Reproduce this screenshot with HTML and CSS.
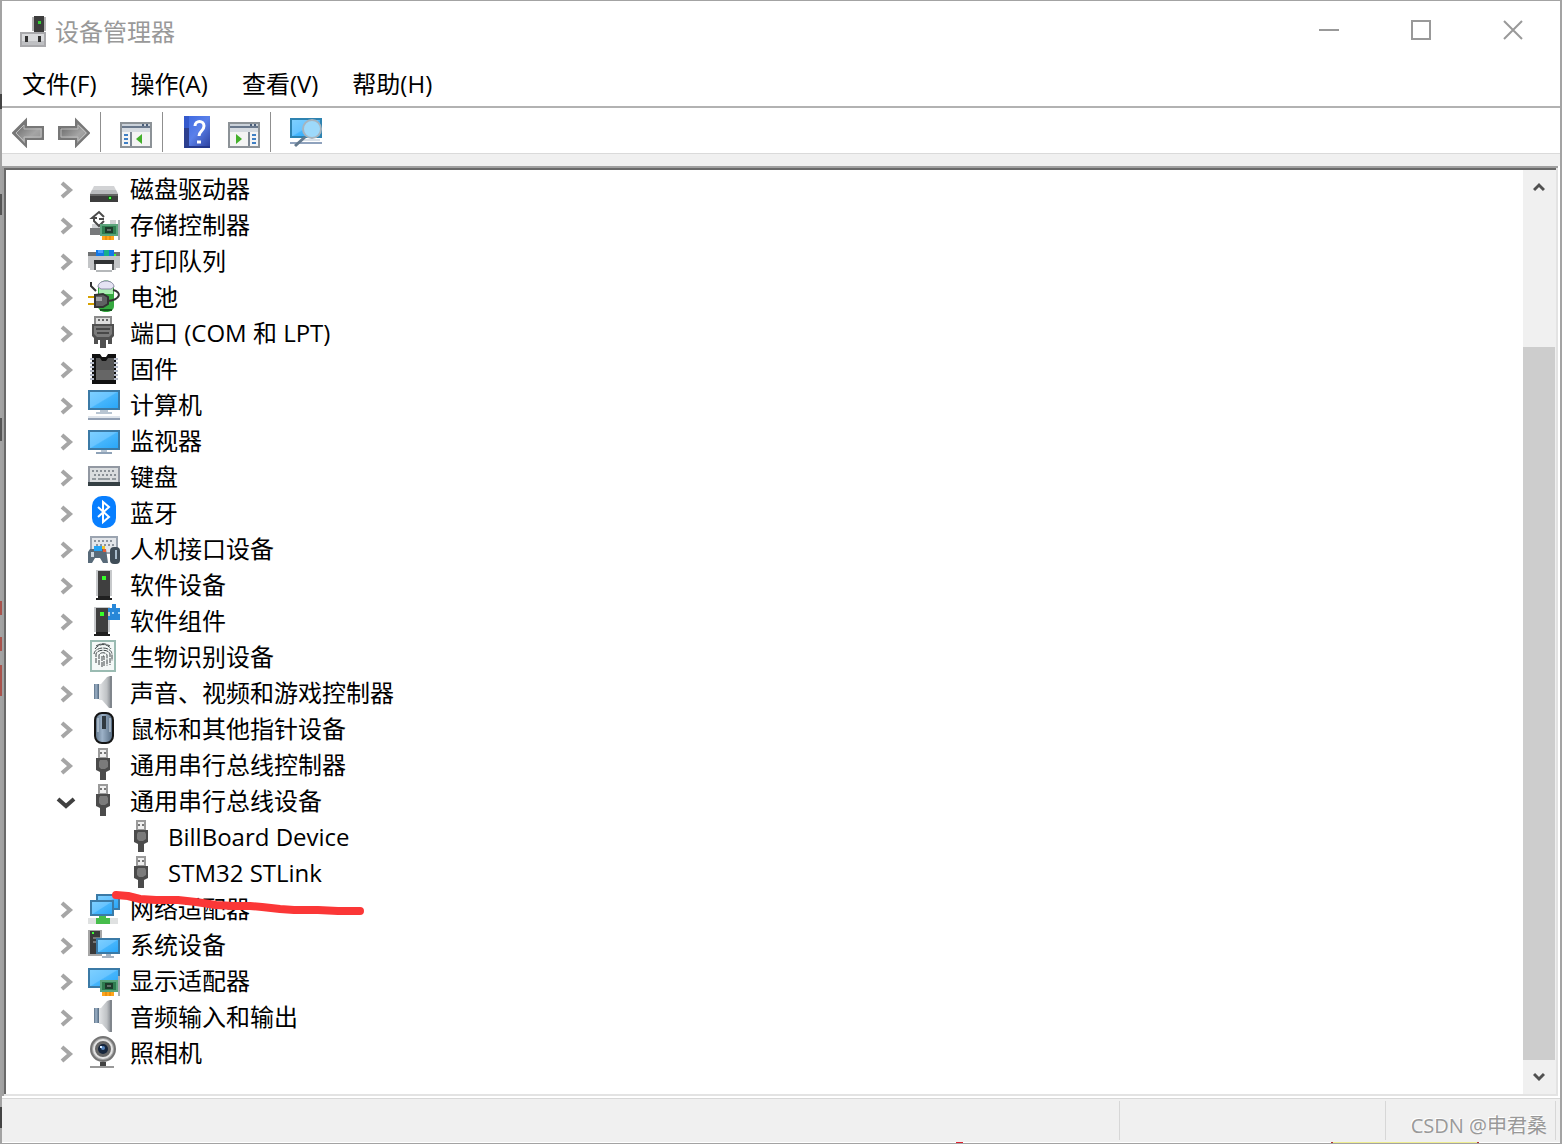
FILE: index.html
```html
<!DOCTYPE html>
<html lang="zh-CN">
<head>
<meta charset="utf-8">
<title>设备管理器</title>
<link rel="stylesheet" href="styles.css">
</head>
<body>
<svg class="sprite" aria-hidden="true">
  <defs>
    <linearGradient id="sky" x1="0" y1="0" x2="1" y2="1"><stop offset="0" stop-color="#7fd0ff"/><stop offset=".48" stop-color="#68c4ff"/><stop offset=".52" stop-color="#45b5fc"/><stop offset="1" stop-color="#27a5f8"/></linearGradient>
    <linearGradient id="metal" x1="0" y1="0" x2="1" y2="1"><stop offset="0" stop-color="#555"/><stop offset=".6" stop-color="#a5a5a5"/><stop offset="1" stop-color="#8a8a8a"/></linearGradient>
    <linearGradient id="blue" x1="0" y1="0" x2="1" y2="1"><stop offset="0" stop-color="#3b67e0"/><stop offset=".5" stop-color="#5a80ea"/><stop offset="1" stop-color="#2b3f9c"/></linearGradient>
    <linearGradient id="cone" x1="0" y1="0" x2="1" y2="0"><stop offset="0" stop-color="#e2e4e6"/><stop offset=".6" stop-color="#bfc2c5"/><stop offset="1" stop-color="#777c82"/></linearGradient>
    <linearGradient id="steel" x1="0" y1="0" x2="1" y2="0"><stop offset="0" stop-color="#5c7186"/><stop offset=".4" stop-color="#9db2c8"/><stop offset="1" stop-color="#52687e"/></linearGradient>
    <symbol id="next" viewBox="0 0 32 32"><path d="M12 11l8 7-8 7" fill="none" stroke="#a6a6a6" stroke-width="4"/></symbol>
    <symbol id="open" viewBox="0 0 32 32"><path d="M8 15l8 7 8-7" fill="none" stroke="#404040" stroke-width="4"/></symbol>
    <symbol id="card" viewBox="0 0 32 32"><path d="M14 28h12v4H14z" fill="#ffa51c"/><path d="M18 28v4M22 28v4" stroke="#d97d00"/><path d="M12 16h18v12H12z" fill="#2f7d50"/><path d="M13 17h16v10H13z" fill="none" stroke="#5ba57c" stroke-width="2"/><path d="M17 19h8v6h-8z" fill="#1d3b2b"/><path d="M19 21h4v2h-4z" fill="#62706a"/><path d="M30 12h2v20h-2z" fill="#a9afb3"/></symbol>
    <symbol id="manager" viewBox="0 0 32 32"><path d="M14 0h10v18H14z" fill="#3d3d3d"/><path d="M13 1v14M25 1v14" stroke="#b5b5b5" stroke-width="2"/><path d="M18 5h3v3h-3z" fill="#35d035"/><path d="M1 17h24v13H1z" fill="#d9dadc" stroke="#a9a9ac" stroke-width="2"/><path d="M2 25h22v4H2z" fill="#bfc0c3"/><path d="M5 20h3v6H5zM18 20h3v6h-3z" fill="#333"/></symbol>
    <symbol id="disk" viewBox="0 0 32 32"><path d="M6 14h20l4 8H2z" fill="#d2d3d5"/><path d="M4 18h24l2 4H2z" fill="#b9bbbd"/><path d="M2 22h28v8H2z" fill="#3d3d3d"/><path d="M2 23h28" stroke="#656565" stroke-width="2"/><path d="M20 24h4v4h-4z" fill="#1c5a1c"/><path d="M21 25h2v2h-2z" fill="#4cff4c"/></symbol>
    <symbol id="storage" viewBox="0 0 32 32"><path d="M2 20h12v7H2z" fill="#77797b"/><path d="M22 12h6v4h-6zM4 16h10v4H4z" fill="#d0d2d4"/><path d="M16 9l-5-5-7 6h5M6 10v3l5 5 5-5M16 11h-5" fill="none" stroke="#4a4a4a" stroke-width="2"/><use href="#card"/></symbol>
    <symbol id="printer" viewBox="0 0 32 32"><path d="M0 8h32v6H0z" fill="#6e7173"/><path d="M8 6h18v6H8z" fill="#1478e6"/><path d="M16 6h5v6h-5z" fill="#17b08a"/><path d="M10 6h5v3h-5z" fill="#48a0ff"/><path d="M0 12h32v12h-4v2h-4V18H8v8H2v-2H0z" fill="#c3c5c7"/><path d="M6 16h20v4H6z" fill="#303234"/><path d="M8 20h16v8H8z" fill="#fff"/><path d="M8 27h16" stroke="#b5b8ba" stroke-width="2"/><path d="M7 20v6M25 20v6" stroke="#606365" stroke-width="2"/><path d="M26 10h2v2h-2z" fill="#3cff3c"/></symbol>
    <symbol id="battery" viewBox="0 0 32 32"><path d="M10 8c0-10 16-10 16 0v18c0 8-16 8-16 0z" fill="#35a83f"/><path d="M11 8h14v6H11z" fill="#a9eeb0"/><path d="M10 7c0-8 16-8 16 0l-3 2H13z" fill="#e5e3f3" stroke="#8d8aa8"/><path d="M12 30h12" stroke="#155c1d" stroke-width="2"/><path d="M0 17h7M0 24h7" stroke="#d7a200" stroke-width="2"/><path d="M7 15l8-1 5 3v7l-5 3H7z" fill="#606163" stroke="#333" stroke-width="2"/><path d="M8 17h6v4H8z" fill="#a2a3a5"/><path d="M19 21c14-1 15-9 6-11M3 2v4l5 5" fill="none" stroke="#333" stroke-width="2"/></symbol>
    <symbol id="port" viewBox="0 0 32 32"><path d="M7 1h16v8H7z" fill="#dedede" stroke="#8b8b8b" stroke-width="2"/><path d="M10 4h2M14 4h2M18 4h2" stroke="#666" stroke-width="2"/><path d="M4 8h22v12l-2 2v6h-4v-4h-2v8h-6v-8h-2v4H6v-6l-2-2z" fill="#505050"/><path d="M6 10h18v8l-3 3H9l-3-3z" fill="#7b7b7b"/><path d="M8 13h14M9 17h12" stroke="#484848" stroke-width="2"/></symbol>
    <symbol id="firmware" viewBox="0 0 32 32"><path d="M4 2h8l2 3h4l2-3h8v30H4z" fill="#111"/><path d="M8 6h4l2 3h4l2-3h6v22H8z" fill="#555"/><path d="M8 18h18v10H8z" fill="#666"/><path d="M4 6v23M28 6v23" stroke="#b4bac8" stroke-width="4" stroke-dasharray="2 2"/></symbol>
    <symbol id="computer" viewBox="0 0 32 32"><path d="M1 3h30v18H1z" fill="url(#sky)" stroke="#3b7aa6" stroke-width="2"/><path d="M12 22h8v2h-8zM8 24h16v2H8z" fill="#b8c5d2"/><path d="M0 28h32v2H0z" fill="#dfe5ec"/><path d="M0 30h32v2H0z" fill="#92a0b4"/></symbol>
    <symbol id="monitor" viewBox="0 0 32 32"><path d="M1 7h30v18H1z" fill="url(#sky)" stroke="#3b7aa6" stroke-width="2"/><path d="M13 26h6v2h-6z" fill="#b7c5d3"/><path d="M8 28h16v2H8z" fill="#8ea2b7"/></symbol>
    <symbol id="keyboard" viewBox="0 0 32 32"><path d="M1 7h30v16H1z" fill="#dadddf" stroke="#9298a2" stroke-width="2"/><path d="M4 11h24M6 15h22" stroke="#888f95" stroke-width="2" stroke-dasharray="2 2"/><path d="M4 19h4M10 19h12M24 19h4" stroke="#92999e" stroke-width="2"/><path d="M0 22h32v4H0z" fill="#354044"/></symbol>
    <symbol id="bluetooth" viewBox="0 0 32 32"><rect x="4" width="24" height="32" rx="10" fill="#087fff"/><path d="M10 11l11 10-6 5V6l6 5-11 10" fill="none" stroke="#fff" stroke-width="2"/></symbol>
    <symbol id="hid" viewBox="0 0 32 32"><path d="M3 5h26v16H3z" fill="#e3e6ea" stroke="#9ba4b0" stroke-width="2"/><path d="M6 9h20M8 13h18" stroke="#8c949d" stroke-width="2" stroke-dasharray="2 2"/><path d="M2 17h16l2 14h-5l-3-5H7l-3 5H0V20z" fill="#586a79"/><path d="M6 14h8v5H6z" fill="#23a3f5"/><path d="M3 20h3v5H3z" fill="#c9d5df"/><path d="M14 14h3v3h-3z" fill="#f0c52a"/><path d="M15 17h3v3h-3z" fill="#e85a38"/><rect x="22" y="15" width="10" height="17" rx="4" fill="#404d58"/><path d="M28 18v9" stroke="#a8bbcb" stroke-width="2"/></symbol>
    <symbol id="software" viewBox="0 0 32 32"><path d="M8 2h16v26H8z" fill="#c7c9cb"/><path d="M10 3h12v25H10z" fill="#3f3f3f"/><path d="M14 8h4v4h-4z" fill="#36ff28"/><path d="M10 28h12v2h2v2H8v-2h2z" fill="#202020"/></symbol>
    <symbol id="component" viewBox="0 0 32 32"><path d="M6 3h16v25H6z" fill="#c7c9cb"/><path d="M8 4h12v24H8z" fill="#3f3f3f"/><path d="M12 8h4v4h-4z" fill="#36ff28"/><path d="M8 28h12v2h2v2H6v-2h2z" fill="#202020"/><path d="M20 4h4V0h4v4h4v12H20v-4h2V8h-2z" fill="#2787d8"/><path d="M24 8h2v2h-2zM30 8h2v2h-2z" fill="#a5d5f8"/></symbol>
    <symbol id="finger" viewBox="0 0 32 32"><path d="M3 1h24v30H3z" fill="#f4f8f7" stroke="#9abbb2" stroke-width="2"/><path d="M7 9c4-6 12-6 16 0M6 14c1-8 17-8 18 0v7M8 23v-9c1-5 13-5 14 0v11M11 25V15c1-3 7-3 8 0v11M14 27V16h2v11M8 6c5-3 9-3 14 0" fill="none" stroke="#3e4547" stroke-dasharray="5 1"/></symbol>
    <symbol id="speaker" viewBox="0 0 32 32"><path d="M6 8h5v15H6z" fill="url(#steel)"/><path d="M11 8h2l6-7 3-1h2v32h-3l-7-8h-3z" fill="url(#cone)"/><path d="M23 0v32" stroke="#80868c" stroke-width="2"/></symbol>
    <symbol id="mouse" viewBox="0 0 32 32"><rect x="7" y="1" width="18" height="30" rx="7" fill="url(#steel)" stroke="#151515" stroke-width="2"/><path d="M10 6v14M22 6v14" stroke="#c7d3df" stroke-width="2" opacity=".6"/><path d="M16 4v13" stroke="#303940" stroke-width="4"/></symbol>
    <symbol id="usb" viewBox="0 0 32 32"><path d="M10 0h10v10H10z" fill="#9a9a9a"/><path d="M12 2h6v7h-6z" fill="#eee"/><path d="M12 4h2v2h-2zM16 4h2v2h-2z" fill="#777"/><path d="M8 10h14v12l-4 2v8h-6v-8l-4-2z" fill="#4b4b4b"/><path d="M12 12h7l1 2v5l-3 2h-4l-2-2v-5z" fill="#7b7b7b"/></symbol>
    <symbol id="network" viewBox="0 0 32 32"><path d="M9 3h22v14H9z" fill="url(#sky)" stroke="#3b7aa6" stroke-width="2"/><path d="M3 9h22v14H3z" fill="url(#sky)" stroke="#3b7aa6" stroke-width="2"/><path d="M0 26h30v6H0z" fill="#dfe1e1"/><path d="M11 24h7v2h4v6H8v-6h3z" fill="#46bd4b"/></symbol>
    <symbol id="system" viewBox="0 0 32 32"><path d="M0 2h14v26H0z" fill="#a6a6a6"/><path d="M2 3h10v23H2z" fill="#3a3a3a"/><path d="M5 10h7M5 14h7" stroke="#777" stroke-width="2"/><path d="M4 4h2v2H4z" fill="#3cff35"/><path d="M9 11h22v14H9z" fill="url(#sky)" stroke="#3b7aa6" stroke-width="2"/><path d="M18 26h5v2h-5zM14 28h12v2H14z" fill="#a4b2c1"/></symbol>
    <symbol id="display" viewBox="0 0 32 32"><path d="M1 5h30v18H1z" fill="url(#sky)" stroke="#3b7aa6" stroke-width="2"/><use href="#card"/></symbol>
    <symbol id="camera" viewBox="0 0 32 32"><circle cx="15" cy="13" r="12" fill="#a5a5a5" stroke="#747474" stroke-width="2"/><circle cx="15" cy="13" r="9" fill="#666" stroke="#e4e4e4" stroke-width="2"/><circle cx="15" cy="13" r="5" fill="#17263c"/><circle cx="15" cy="12" r="2" fill="#5685bd"/><path d="M12 10h2v2h-2z" fill="#dcecff"/><path d="M12 26h6v4h-6z" fill="#424242"/><path d="M2 30h24v2H2z" fill="#999"/></symbol>
    <symbol id="panel" viewBox="0 0 32 32"><path d="M1 7h30v24H1z" fill="#f4f4f4" stroke="#8c9297" stroke-width="2"/><path d="M2 8h28v2H2z" fill="#cbd2da"/><path d="M2 10h28v2H2z" fill="#69788c"/><path d="M22 8h2v2h-2zM26 8h2v2h-2z" fill="#4a5e7a"/><path d="M2 12h28v4H2z" fill="#d6dbe1"/></symbol>
  </defs>
</svg>

<main class="window">
  <header class="titlebar">
    <svg class="icon"><use href="#manager"/></svg>
    <h1 class="title">设备管理器</h1>
    <button class="control" aria-label="最小化"><svg class="glyph" viewBox="0 0 22 22"><path d="M1 11h20"/></svg></button>
    <button class="control" aria-label="最大化"><svg class="glyph" viewBox="0 0 22 22"><path d="M2 2h18v18H2z"/></svg></button>
    <button class="control" aria-label="关闭"><svg class="glyph" viewBox="0 0 22 22"><path d="M2 2l18 18M20 2L2 20"/></svg></button>
  </header>

  <nav class="menubar">
    <button class="menu">文件(F)</button>
    <button class="menu">操作(A)</button>
    <button class="menu">查看(V)</button>
    <button class="menu">帮助(H)</button>
  </nav>

  <div class="toolbar">
    <button class="tool" aria-label="后退"><svg class="icon" viewBox="0 0 32 32"><path d="M1 17L14 4v7h17v12H14v7z" fill="url(#metal)" stroke="#777" stroke-width="2"/><path d="M4 17l8-8v4h17v8H12v4z" fill="none" stroke="#bbb"/></svg></button>
    <button class="tool" aria-label="前进"><svg class="icon" viewBox="0 0 32 32"><path d="M31 17L18 4v7H1v12h17v7z" fill="url(#metal)" stroke="#777" stroke-width="2"/><path d="M28 17l-8-8v4H3v8h17v4z" fill="none" stroke="#bbb"/></svg></button>
    <span class="divider"></span>
    <button class="tool" aria-label="显示控制台树"><svg class="icon" viewBox="0 0 32 32"><use href="#panel"/><path d="M10 16h2v14h-2z" fill="#7b8590"/><path d="M4 19h4M4 23h4M4 27h4" stroke="#3f7fc4" stroke-width="2"/><path d="M22 18v10l-6-5z" fill="#43b02a"/></svg></button>
    <span class="divider"></span>
    <button class="tool" aria-label="帮助"><svg class="icon" viewBox="0 0 32 32"><path d="M2 0h26v32H2z" fill="url(#blue)"/><path d="M2 0h5v32H2z" fill="#2c3f8f"/><path d="M2 0h5v12H2z" fill="#3459cc"/><path d="M3 31h25" stroke="#25398d" stroke-width="2"/><path d="M13 10c0-6 9-6 9 0 0 5-5 5-5 10M15 26h4" fill="none" stroke="#fff" stroke-width="3"/></svg></button>
    <button class="tool" aria-label="操作窗格"><svg class="icon" viewBox="0 0 32 32"><use href="#panel"/><path d="M20 16h2v14h-2z" fill="#7b8590"/><path d="M24 19h4M24 23h4M24 27h4" stroke="#3f7fc4" stroke-width="2"/><path d="M8 18v10l6-5z" fill="#43b02a"/></svg></button>
    <span class="divider"></span>
    <button class="tool" aria-label="扫描检测硬件改动"><svg class="icon" viewBox="0 0 32 32"><path d="M1 3h30v18H1z" fill="url(#sky)" stroke="#2e83b1" stroke-width="2"/><path d="M0 26h32v2H0z" fill="#8fa2bd"/><path d="M10 24h20" stroke="#d8e0e8" stroke-width="2"/><path d="M15 21L5 30" stroke="#647a8e" stroke-width="3"/><circle cx="22" cy="13" r="9" fill="#9dd9fb" stroke="#a6b4bf" stroke-width="2"/></svg></button>
  </div>

  <section class="pane">
    <ul class="tree">
      <li class="row"><button class="toggle" aria-label="展开"><svg class="icon"><use href="#next"/></svg></button><svg class="icon"><use href="#disk"/></svg><span class="label">磁盘驱动器</span></li>
      <li class="row"><button class="toggle" aria-label="展开"><svg class="icon"><use href="#next"/></svg></button><svg class="icon"><use href="#storage"/></svg><span class="label">存储控制器</span></li>
      <li class="row"><button class="toggle" aria-label="展开"><svg class="icon"><use href="#next"/></svg></button><svg class="icon"><use href="#printer"/></svg><span class="label">打印队列</span></li>
      <li class="row"><button class="toggle" aria-label="展开"><svg class="icon"><use href="#next"/></svg></button><svg class="icon"><use href="#battery"/></svg><span class="label">电池</span></li>
      <li class="row"><button class="toggle" aria-label="展开"><svg class="icon"><use href="#next"/></svg></button><svg class="icon"><use href="#port"/></svg><span class="label">端口 (COM 和 LPT)</span></li>
      <li class="row"><button class="toggle" aria-label="展开"><svg class="icon"><use href="#next"/></svg></button><svg class="icon"><use href="#firmware"/></svg><span class="label">固件</span></li>
      <li class="row"><button class="toggle" aria-label="展开"><svg class="icon"><use href="#next"/></svg></button><svg class="icon"><use href="#computer"/></svg><span class="label">计算机</span></li>
      <li class="row"><button class="toggle" aria-label="展开"><svg class="icon"><use href="#next"/></svg></button><svg class="icon"><use href="#monitor"/></svg><span class="label">监视器</span></li>
      <li class="row"><button class="toggle" aria-label="展开"><svg class="icon"><use href="#next"/></svg></button><svg class="icon"><use href="#keyboard"/></svg><span class="label">键盘</span></li>
      <li class="row"><button class="toggle" aria-label="展开"><svg class="icon"><use href="#next"/></svg></button><svg class="icon"><use href="#bluetooth"/></svg><span class="label">蓝牙</span></li>
      <li class="row"><button class="toggle" aria-label="展开"><svg class="icon"><use href="#next"/></svg></button><svg class="icon"><use href="#hid"/></svg><span class="label">人机接口设备</span></li>
      <li class="row"><button class="toggle" aria-label="展开"><svg class="icon"><use href="#next"/></svg></button><svg class="icon"><use href="#software"/></svg><span class="label">软件设备</span></li>
      <li class="row"><button class="toggle" aria-label="展开"><svg class="icon"><use href="#next"/></svg></button><svg class="icon"><use href="#component"/></svg><span class="label">软件组件</span></li>
      <li class="row"><button class="toggle" aria-label="展开"><svg class="icon"><use href="#next"/></svg></button><svg class="icon"><use href="#finger"/></svg><span class="label">生物识别设备</span></li>
      <li class="row"><button class="toggle" aria-label="展开"><svg class="icon"><use href="#next"/></svg></button><svg class="icon"><use href="#speaker"/></svg><span class="label">声音、视频和游戏控制器</span></li>
      <li class="row"><button class="toggle" aria-label="展开"><svg class="icon"><use href="#next"/></svg></button><svg class="icon"><use href="#mouse"/></svg><span class="label">鼠标和其他指针设备</span></li>
      <li class="row"><button class="toggle" aria-label="展开"><svg class="icon"><use href="#next"/></svg></button><svg class="icon"><use href="#usb"/></svg><span class="label">通用串行总线控制器</span></li>
      <li class="row"><button class="toggle" aria-label="折叠"><svg class="icon"><use href="#open"/></svg></button><svg class="icon"><use href="#usb"/></svg><span class="label">通用串行总线设备</span></li>
      <li class="row child"><svg class="icon"><use href="#usb"/></svg><span class="label">BillBoard Device</span></li>
      <li class="row child"><svg class="icon"><use href="#usb"/></svg><span class="label">STM32 STLink</span></li>
      <li class="row"><button class="toggle" aria-label="展开"><svg class="icon"><use href="#next"/></svg></button><svg class="icon"><use href="#network"/></svg><span class="label">网络适配器</span>
        <svg class="stroke" viewBox="0 0 260 32"><path d="M8 7l12 1 12 3 16 1 22 0 18 2 20 3 18 1 16 0 12 1 18 2 14 1 24 0 20 1 22 0"/></svg></li>
      <li class="row"><button class="toggle" aria-label="展开"><svg class="icon"><use href="#next"/></svg></button><svg class="icon"><use href="#system"/></svg><span class="label">系统设备</span></li>
      <li class="row"><button class="toggle" aria-label="展开"><svg class="icon"><use href="#next"/></svg></button><svg class="icon"><use href="#display"/></svg><span class="label">显示适配器</span></li>
      <li class="row"><button class="toggle" aria-label="展开"><svg class="icon"><use href="#next"/></svg></button><svg class="icon"><use href="#speaker"/></svg><span class="label">音频输入和输出</span></li>
      <li class="row"><button class="toggle" aria-label="展开"><svg class="icon"><use href="#next"/></svg></button><svg class="icon"><use href="#camera"/></svg><span class="label">照相机</span></li>
    </ul>
    <div class="scrollbar">
      <button class="arrow" aria-label="向上滚动"><svg class="caret" viewBox="0 0 12 10"><path d="M1 8l5-5 5 5"/></svg></button>
      <div class="track"><div class="thumb"></div></div>
      <button class="arrow" aria-label="向下滚动"><svg class="caret" viewBox="0 0 12 10"><path d="M1 2l5 5 5-5"/></svg></button>
    </div>
  </section>

  <footer class="status">
    <div class="cell main-cell"></div>
    <div class="cell mid-cell"></div>
    <div class="cell end-cell"><span class="mark">CSDN @申君桑</span></div>
  </footer>
</main>
</body>
</html>
```
FILE: styles.css
```css
* { box-sizing: border-box; }
body {
  margin: 0;
  background: #fff;
  color: #000;
  font: 24px/34px "Open Sans", "Noto Sans CJK SC", sans-serif;
}
button {
  margin: 0;
  padding: 0;
  border: 0;
  background: none;
  color: inherit;
  font: inherit;
}
.sprite { position: absolute; width: 0; height: 0; }
.icon { display: block; flex: none; width: 32px; height: 32px; }

/* The window behind shows through the left edge as short coloured marks. */
.window {
  display: flex;
  flex-direction: column;
  min-height: 100vh;
  padding-left: 2px;
  border: solid #a3a3a3;
  border-width: 1px 2px 1px 0;
  background: linear-gradient(#a3a3a3 93px, #444 93px 108px, #a3a3a3 108px 193px, #555 193px 214px, #a3a3a3 214px 417px, #555 417px 440px, #a3a3a3 440px 600px, #a8534c 600px 614px, #a3a3a3 614px 636px, #a8534c 636px 650px, #a3a3a3 650px 664px, #a8534c 664px 695px, #a3a3a3 695px 1106px, #444 1106px 1127px, #a3a3a3 1127px) 0 0 / 2px 100% no-repeat;
}

.titlebar { display: flex; align-items: center; height: 61px; padding: 0 1px 0 18px; }
.title { flex: 1; margin: 0 0 0 3px; color: #999; font-size: 24px; font-weight: 400; }
.control { display: flex; align-self: flex-start; align-items: center; justify-content: center; width: 92px; height: 58px; }
.glyph { width: 22px; height: 22px; fill: none; stroke: #999; stroke-width: 2px; }

.menubar {
  display: flex;
  gap: 34px;
  height: 46px;
  padding: 4px 20px;
  border-bottom: 2px solid #b2b2b2;
}

.toolbar { display: flex; padding: 4px 3px 1px; border-bottom: 1px solid #dadada; }
.tool { display: flex; align-items: center; justify-content: center; width: 46px; height: 40px; }
.divider { width: 1px; margin: 0 12px 0 3px; background: #8f8f8f; }

.pane {
  display: flex;
  flex: 1;
  border-top: 12px solid #f0f0f0;
  padding: 4px 4px 2px;
  background:
    linear-gradient(#696969, #696969) 2px 2px / calc(100% - 6px) 2px no-repeat,
    linear-gradient(#696969, #696969) 2px 2px / 2px calc(100% - 4px) no-repeat,
    linear-gradient(#a0a0a0, #a0a0a0) 0 0 / calc(100% - 2px) 2px no-repeat,
    linear-gradient(#a0a0a0, #a0a0a0) 0 0 / 2px 100% no-repeat,
    linear-gradient(#e3e3e3, #e3e3e3) calc(100% - 2px) 0 / 2px 100% no-repeat,
    linear-gradient(#e3e3e3, #e3e3e3) 0 100% / calc(100% - 2px) 2px no-repeat;
}
.tree { flex: 1; margin: 0; padding: 2px 0 0 44px; list-style: none; }
.row { position: relative; display: flex; height: 36px; }
.toggle { width: 38px; height: 32px; }
.child { padding-left: 76px; }
.label { padding-left: 10px; white-space: nowrap; }
.stroke {
  position: absolute;
  left: 58px;
  top: -4px;
  width: 260px;
  height: 32px;
  fill: none;
  stroke: #fb3737;
  stroke-width: 8px;
  stroke-linecap: round;
  stroke-linejoin: round;
}

.scrollbar { display: flex; flex-direction: column; width: 33px; background: #f0f0f0; }
.arrow { display: flex; align-items: center; justify-content: center; height: 34px; padding-right: 2px; }
.caret { width: 12px; height: 10px; fill: none; stroke: #505050; stroke-width: 3px; }
.track { display: flex; flex: 1; flex-direction: column; justify-content: flex-end; padding-right: 1px; }
.thumb { height: calc(100% * 5 / 6); background: #cdcdcd; }

.status {
  display: flex;
  height: 47px;
  padding: 3px 4px 3px 0;
  border-top: 2px solid #fff;
  background:
    linear-gradient(#d7d7d7, #d7d7d7) 0 0 / 100% 1px no-repeat,
    linear-gradient(90deg, #b03030 2px, #f0ee90 2px 146px, #b03030 146px) calc(100% - 81px) 100% / 148px 1px no-repeat,
    linear-gradient(#e02030, #e02030) 954px 100% / 7px 1px no-repeat,
    linear-gradient(#fff, #fff) 0 100% / 100% 1px no-repeat,
    #f0f0f0;
}
.cell { border-right: 1px solid #d7d7d7; }
.main-cell { flex: 1; }
.mid-cell { width: 266px; }
.end-cell { width: 170px; padding: 6px 8px 0 0; text-align: right; }
.mark { color: #999; font-size: 20px; text-shadow: -1px -1px #fff; white-space: nowrap; }
```
